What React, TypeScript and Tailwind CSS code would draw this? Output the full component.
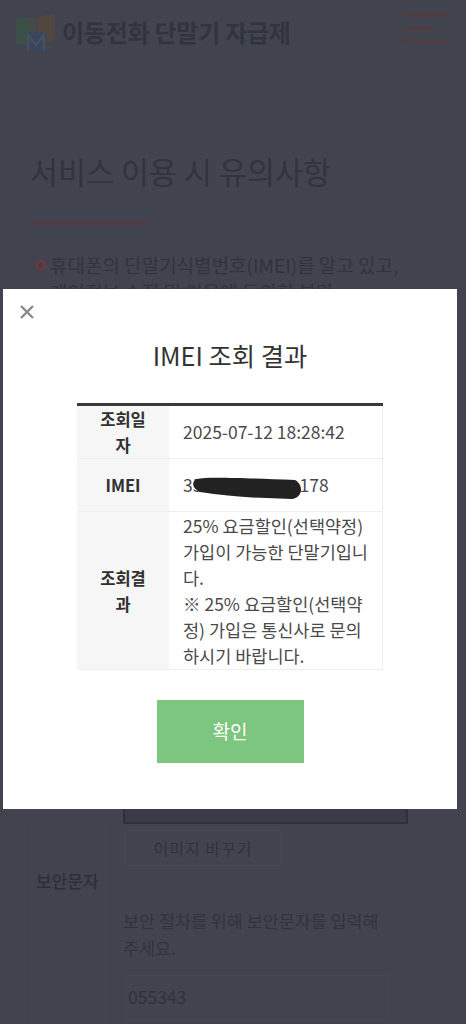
const font = "[font-family:'Noto_Sans_CJK_KR','Noto_Sans',sans-serif]";

const Logo = () => (
    <svg width="40" height="38" viewBox="0 0 40 38" className="shrink-0">
        <rect x="0" y="5" width="13" height="26" fill="#3c4f47" />
        <rect x="13" y="5" width="7" height="18" fill="#474b46" />
        <polygon points="22,4 39,0 39,26 31,30 31,20 22,20" fill="#504740" />
        <rect x="11" y="19" width="18" height="19" fill="#37465c" />
        <path d="M12 37 V22 L20 32 L28 22 V37" fill="none" stroke="#4a4f5e" strokeWidth="2.5" />
    </svg>
);

const Background = () => (
    <div className="flex h-[1024px] flex-col overflow-hidden bg-[#41434f]">
        <header className="flex h-[74px] items-start justify-between pl-4 pr-[18px] pt-[13px]">
            <div className="flex items-center gap-[6px]">
                <Logo />
                <span className="text-[24px] font-bold leading-[38px] tracking-[-0.25px] text-[#31333d]">이동전화 단말기 자급제</span>
            </div>
            <div className="flex w-[45px] flex-col gap-[10px] pt-[1px]">
                <div className="h-[3px] bg-[#533c3e]" />
                <div className="h-[3px] w-[32px] bg-[#533c3e]" />
                <div className="h-[3px] bg-[#533c3e]" />
            </div>
        </header>
        <div className="mx-[31px] mt-[12px] h-px bg-[#444651]" />
        <main className="px-[30px]">
            <h1 className="mt-[62px] whitespace-nowrap text-[30.5px] font-normal leading-[44px] text-[#31333d]">서비스 이용 시 유의사항</h1>
            <div className="mt-[29px] h-[3px] w-[120px] bg-[#563a42]" />
            <div className="mt-[26px] flex gap-[4px] whitespace-nowrap text-[19px] leading-[27px] text-[#31333d]">
                <span className="ml-[6px] mt-[9px] h-[11px] w-[10px] shrink-0 rounded-full border-[3px] border-[#673b3e] bg-[#4a3a42]" />
                <p>휴대폰의 단말기식별번호(IMEI)를 알고 있고,<br />개인정보 수집 및 이용에 동의한 분만</p>
            </div>
        </main>
        <section className="ml-[31px] mr-[30px] mt-[519px] flex flex-1 border-l border-[#434551]">
            <div className="flex w-[74px] shrink-0 flex-col justify-start border-r border-[#434551] pl-[4px] pt-[45px]">
                <span className="whitespace-nowrap text-[17px] font-medium leading-[24px] text-[#2d2f38]">보안문자</span>
            </div>
            <div className="pl-[17px]">
                <div className="-mt-[36px] h-[36px] w-[285px] border-x-2 border-b-2 border-[#2f303b] bg-[#3a3b48]" />
                <div className="ml-[1px] mt-[6px] flex h-[36px] w-[158px] items-center justify-center border border-[#454753] text-[16px] tracking-[1px] text-[#30323b]">이미지 바꾸기</div>
                <p className="mt-[41px] w-[270px] whitespace-nowrap text-[17.4px] leading-[27px] text-[#31333d]">보안 절차를 위해 보안문자를 입력해<br />주세요.</p>
                <div className="ml-[2px] mt-[14px] flex h-[45px] w-[263px] items-center border border-[#444651] pl-[2px] text-[17.5px] text-[#30323b]">055343</div>
            </div>
        </section>
    </div>
);

const Row = ({ label, className, children }: { label: React.ReactNode; className: string; children: React.ReactNode }) => (
    <div className={`flex border-b border-[#eeeeee] ${className}`}>
        <div className="flex w-[92px] shrink-0 items-center justify-center bg-[#f6f6f6] px-5 text-center text-[16.5px] font-bold leading-[26px] text-[#303030]">
            {label}
        </div>
        <div className="flex flex-1 items-center whitespace-nowrap border-r border-[#eeeeee] pl-[14px] text-[17.5px] leading-[26px] text-[#4a4a4a]">
            {children}
        </div>
    </div>
);

const Modal = () => (
    <div className="absolute left-[3px] top-[289px] flex h-[520px] w-[454px] flex-col items-center bg-white">
        <svg width="16" height="16" viewBox="0 0 16 16" className="absolute left-[16px] top-[15px]">
            <path d="M2 2 L14 14 M14 2 L2 14" stroke="#8a8a8a" strokeWidth="2.4" />
        </svg>
        <h2 className="mt-[46px] text-[25.3px] font-normal leading-[40px] text-[#333333]">IMEI 조회 결과</h2>
        <div className="mt-[28px] w-[306px] border-t-[3px] border-[#3a3a3a]">
            <Row label={<>조회일<br />자</>} className="h-[53px]">2025-07-12 18:28:42</Row>
            <Row label="IMEI" className="h-[53px]">
                <span className="relative">
                    35
                    <span className="invisible">0000000000</span>
                    178
                    <svg width="130" height="30" viewBox="0 0 130 30" className="absolute left-0 top-0">
                        <path d="M12 8 C17 4 57 6 112 8 C120 12 121 25 109 27 C77 26 47 25 17 20 C9 16 9 11 12 8 Z" fill="#222222" />
                    </svg>
                </span>
            </Row>
            <Row label={<>조회결<br />과</>} className="h-[158px]">
                <p>25% 요금할인(선택약정)<br />가입이 가능한 단말기입니<br />다.<br />※ 25% 요금할인(선택약<br />정) 가입은 통신사로 문의<br />하시기 바랍니다.</p>
            </Row>
        </div>
        <button className="mt-[30px] h-[63px] w-[147px] bg-[#7dc680] text-[19px] text-white">확인</button>
    </div>
);

export default function App() {
    return (
        <div className={`relative h-[1024px] w-[466px] overflow-hidden ${font}`}>
            <Background />
            <Modal />
        </div>
    );
}
